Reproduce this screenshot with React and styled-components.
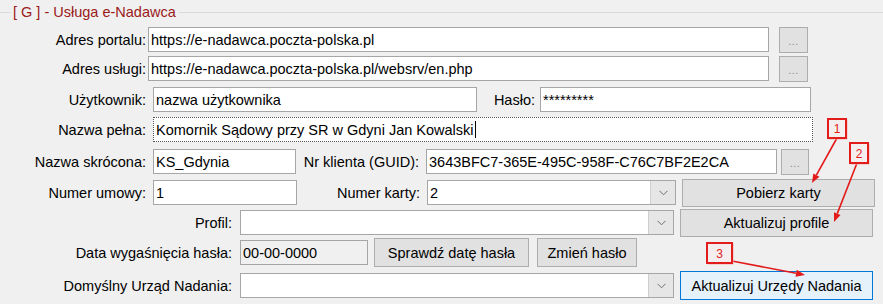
import React from "react";
import styled, { createGlobalStyle } from "styled-components";

const GlobalStyle = createGlobalStyle`
    * { box-sizing: border-box; }
    body {
        margin: 0;
        background: #f0f0f0;
        font-family: "Liberation Sans", Arial, sans-serif;
        font-size: 14.5px;
        color: #000;
    }
`;

const Page = styled.div`
    position: relative;
    width: 883px;
    height: 304px;
    background: #f0f0f0;
    overflow: hidden;
`;

const Legend = styled.div`
    display: flex;
    align-items: center;
    height: 24px;
    color: #9a1a1a;
    &::before, &::after {
        content: "";
        height: 1px;
        background: #dadada;
        margin-top: 1px;
    }
    &::before { width: 10px; margin-right: 3px; }
    &::after { flex: 1; margin-left: 3px; }
`;

const Form = styled.div`
    display: flex;
    flex-direction: column;
`;

const Row = styled.div`
    display: flex;
    align-items: center;
    height: 25px;
    margin-top: ${p => p.$mt}px;
`;

const Label = styled.div`
    width: ${p => p.$w}px;
    flex-shrink: 0;
    text-align: right;
    white-space: nowrap;
`;

const TextBox = styled.div`
    width: ${p => p.$w}px;
    margin-left: ${p => p.$ml}px;
    height: 25px;
    flex-shrink: 0;
    display: flex;
    align-items: center;
    padding-left: 2px;
    white-space: nowrap;
    overflow: hidden;
    background: ${p => (p.$readOnly ? "#f0f0f0" : "#fff")};
    border: 1px ${p => (p.$focused ? "dotted #555" : "solid #a6a6a6")};
`;

const Caret = styled.span`
    display: inline-block;
    width: 1px;
    height: 17px;
    background: #000;
    margin-left: 1px;
`;

const Combo = styled(TextBox)`
    position: relative;
    padding-right: 26px;
`;

const ComboArrow = styled.div`
    position: absolute;
    top: 0;
    right: 0;
    width: 25px;
    height: 23px;
    background: #e6e6e6;
    border-left: 1px solid #cfcfcf;
    display: flex;
    align-items: center;
    justify-content: center;
`;

const Button = styled.div`
    width: ${p => p.$w}px;
    margin-left: ${p => p.$ml}px;
    height: ${p => p.$h || 28}px;
    flex-shrink: 0;
    display: flex;
    align-items: center;
    justify-content: center;
    white-space: nowrap;
    background: ${p => (p.$active ? "#e5f1fb" : "#e1e1e1")};
    border: 1px solid ${p => (p.$active ? "#0078d7" : "#adadad")};
`;

const DotsButton = styled(Button)`
    align-items: flex-end;
    padding-bottom: 5px;
    font-size: 11px;
    color: #8a8a8a;
    letter-spacing: 0.5px;
`;

function Chevron() {
    return (
        <svg width="9" height="6" viewBox="0 0 9 6">
            <polyline points="0.5,0.8 4.5,4.8 8.5,0.8" fill="none" stroke="#6d6d6d" strokeWidth="1" />
        </svg>
    );
}

function ComboBox({ w, ml, value }) {
    return (
        <Combo $w={w} $ml={ml}>
            {value}
            <ComboArrow><Chevron /></ComboArrow>
        </Combo>
    );
}

const Overlay = styled.svg`
    position: absolute;
    left: 0;
    top: 0;
    pointer-events: none;
`;

const RED = "#e21b1b";

function Marker({ x, y, w, h, n }) {
    return (
        <g>
            <rect x={x + 1} y={y + 1} width={w} height={h} fill="none" stroke="#f3b0b0" strokeWidth="1" />
            <rect x={x} y={y} width={w} height={h} fill="#f4eeee" stroke={RED} strokeWidth="2" />
            <text x={x + w / 2} y={y + h - 5} textAnchor="middle" fontSize="12"
                fontFamily="Liberation Sans, Arial, sans-serif" fill={RED}>{n}</text>
        </g>
    );
}

function Arrow({ x1, y1, x2, y2 }) {
    const a = Math.atan2(y2 - y1, x2 - x1);
    const len = 9, wid = 3.5;
    const bx = x2 - len * Math.cos(a), by = y2 - len * Math.sin(a);
    const px = -Math.sin(a) * wid, py = Math.cos(a) * wid;
    return (
        <g>
            <line x1={x1} y1={y1} x2={bx} y2={by} stroke={RED} strokeWidth="1.6" />
            <polygon points={`${x2},${y2} ${bx + px},${by + py} ${bx - px},${by - py}`} fill={RED} />
        </g>
    );
}

export default function App() {
    return (
        <>
            <GlobalStyle />
            <Page>
                <Legend>[ G ] - Usługa e-Nadawca</Legend>
                <Form>
                    <Row $mt={3}>
                        <Label $w={146}>Adres portalu:</Label>
                        <TextBox $w={621} $ml={2}>https://e-nadawca.poczta-polska.pl</TextBox>
                        <DotsButton $w={29} $ml={10} $h={26}>...</DotsButton>
                    </Row>
                    <Row $mt={4}>
                        <Label $w={146}>Adres usługi:</Label>
                        <TextBox $w={621} $ml={2}>https://e-nadawca.poczta-polska.pl/websrv/en.php</TextBox>
                        <DotsButton $w={29} $ml={10} $h={26}>...</DotsButton>
                    </Row>
                    <Row $mt={6}>
                        <Label $w={146}>Użytkownik:</Label>
                        <TextBox $w={324} $ml={7}>nazwa użytkownika</TextBox>
                        <Label $w={58}>Hasło:</Label>
                        <TextBox $w={271} $ml={5}>*********</TextBox>
                    </Row>
                    <Row $mt={5}>
                        <Label $w={146}>Nazwa pełna:</Label>
                        <TextBox $w={660} $ml={7} $focused>Komornik Sądowy przy SR w Gdyni Jan Kowalski<Caret /></TextBox>
                    </Row>
                    <Row $mt={7}>
                        <Label $w={146}>Nazwa skrócona:</Label>
                        <TextBox $w={143} $ml={7}>KS_Gdynia</TextBox>
                        <Label $w={123}>Nr klienta (GUID):</Label>
                        <TextBox $w={351} $ml={7}>3643BFC7-365E-495C-958F-C76C7BF2E2CA</TextBox>
                        <DotsButton $w={28} $ml={4} $h={26}>...</DotsButton>
                    </Row>
                    <Row $mt={6}>
                        <Label $w={146}>Numer umowy:</Label>
                        <TextBox $w={144} $ml={7}>1</TextBox>
                        <Label $w={123}>Numer karty:</Label>
                        <ComboBox w={249} ml={7} value="2" />
                        <Button $w={193} $ml={6}>Pobierz karty</Button>
                    </Row>
                    <Row $mt={5}>
                        <Label $w={232}>Profil:</Label>
                        <ComboBox w={434} ml={8} value="" />
                        <Button $w={193} $ml={6}>Aktualizuj profile</Button>
                    </Row>
                    <Row $mt={5}>
                        <Label $w={232}>Data wygaśnięcia hasła:</Label>
                        <TextBox $w={128} $ml={8} $readOnly>00-00-0000</TextBox>
                        <Button $w={155} $ml={6} $h={29}>Sprawdź datę hasła</Button>
                        <Button $w={100} $ml={8} $h={29}>Zmień hasło</Button>
                    </Row>
                    <Row $mt={8}>
                        <Label $w={232}>Domyślny Urząd Nadania:</Label>
                        <ComboBox w={434} ml={8} value="" />
                        <Button $w={193} $ml={6} $h={29} $active>Aktualizuj Urzędy Nadania</Button>
                    </Row>
                </Form>
                <Overlay width="883" height="304">
                    <Arrow x1={837} y1={138} x2={812} y2={183} />
                    <Arrow x1={857} y1={163} x2={834} y2={222} />
                    <Arrow x1={732} y1={261} x2={805} y2={275} />
                    <Marker x={828} y={119} w={18} h={19} n="1" />
                    <Marker x={850} y={143} w={18} h={20} n="2" />
                    <Marker x={707} y={243} w={25} h={20} n="3" />
                </Overlay>
            </Page>
        </>
    );
}
